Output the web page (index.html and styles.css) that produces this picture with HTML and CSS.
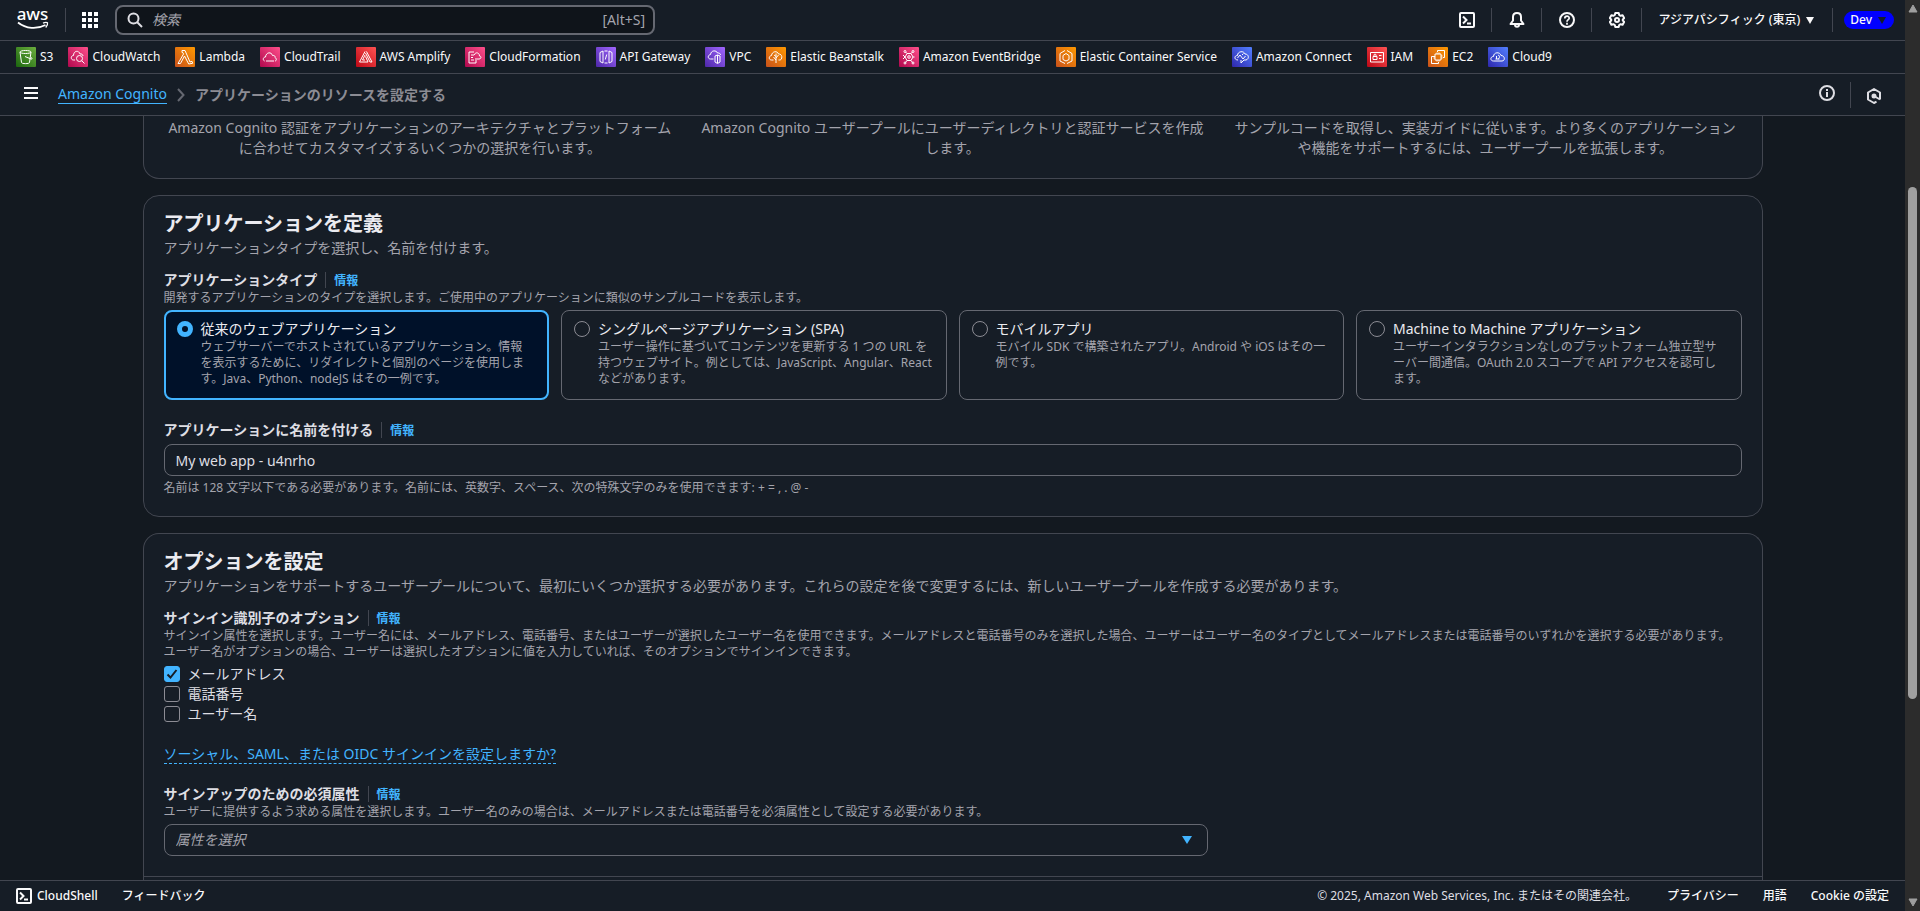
FILE: index.html
```html
<!DOCTYPE html>
<html lang="ja">
<head>
<meta charset="utf-8">
<title>アプリケーションのリソースを設定する | Amazon Cognito</title>
<meta name="viewport" content="width=device-width, initial-scale=1">
<link rel="stylesheet" href="styles.css">
</head>
<body>
<svg class="defs" aria-hidden="true">
  <defs>
    <linearGradient id="g-green" x1="0" y1="1" x2="1" y2="0"><stop offset="0" stop-color="#1b660f"/><stop offset="1" stop-color="#6cae3e"/></linearGradient>
    <linearGradient id="g-pink" x1="0" y1="1" x2="1" y2="0"><stop offset="0" stop-color="#b0084d"/><stop offset="1" stop-color="#ff4f8b"/></linearGradient>
    <linearGradient id="g-orange" x1="0" y1="1" x2="1" y2="0"><stop offset="0" stop-color="#c8511b"/><stop offset="1" stop-color="#ff9900"/></linearGradient>
    <linearGradient id="g-red" x1="0" y1="1" x2="1" y2="0"><stop offset="0" stop-color="#bd0816"/><stop offset="1" stop-color="#ff5252"/></linearGradient>
    <linearGradient id="g-purple" x1="0" y1="1" x2="1" y2="0"><stop offset="0" stop-color="#4d27a8"/><stop offset="1" stop-color="#a166ff"/></linearGradient>
    <linearGradient id="g-blue" x1="0" y1="1" x2="1" y2="0"><stop offset="0" stop-color="#2e27ad"/><stop offset="1" stop-color="#527fff"/></linearGradient>
  </defs>
</svg>
<div class="app">
  <header class="topbar">
    <a class="logo" href="#" aria-label="AWS"><svg width="32" height="38" viewBox="0 -9 32 38"><text x="15.500" y="10" text-anchor="middle">aws</text><path d="M1 12.500C9 19 20 19.500 28.500 15" fill="none" stroke="#fff" stroke-width="1.800"/><path d="M26 13.200c2-1 4-.8 4.500-.4.300 1-.3 3-1.800 4.700" fill="none" stroke="#fff" stroke-width="1.300"/></svg></a>
    <button class="apps" aria-label="サービス"><svg width="16" height="16" fill="#fff"><path d="M0 0h4v4H0zM6 0h4v4H6zM12 0h4v4h-4zM0 6h4v4H0zM6 6h4v4H6zM12 6h4v4h-4zM0 12h4v4H0zM6 12h4v4H6zM12 12h4v4h-4z"/></svg></button>
    <label class="search">
      <svg width="16" height="16" fill="none" stroke="#dedee3" stroke-width="2"><circle cx="6.500" cy="6.500" r="5"/><path d="M10 10l5 5"/></svg>
      <input type="search" placeholder="検索" aria-label="検索">
      <span>[Alt+S]</span>
    </label>
    <nav class="tools">
      <button aria-label="CloudShell"><svg width="16" height="16" fill="none" stroke="#f9f9fa" stroke-width="2"><rect x="1" y="1" width="14" height="14" rx="1"/><path d="M4 4.500l3.500 3.500L4 11.500M8 11.500h4"/></svg></button>
      <button aria-label="通知"><svg width="16" height="16" fill="none" stroke="#f9f9fa" stroke-width="2" stroke-linejoin="round"><path d="M8 1C5.500 1 4 2.800 4 5v3.500L1.500 12h13L12 8.500V5c0-2.200-1.500-4-4-4zM6 12.500c0 3 4 3 4 0"/></svg></button>
      <button aria-label="ヘルプ"><svg width="16" height="16" fill="none" stroke="#f9f9fa" stroke-width="2"><circle cx="8" cy="8" r="7"/><path d="M5.800 6.500c0-3 4.400-3 4.400-.3C10.200 7.700 8 7.700 8 9.700M8 10.800v2" stroke-width="1.700"/></svg></button>
      <button aria-label="設定"><svg width="16" height="16" fill="none" stroke="#f9f9fa" stroke-width="2" stroke-linejoin="round"><path d="M6.300 1h3.400l.5 2 1.400.8 2-.6 1.600 2.900L13.800 7.500v1l1.400 1.400-1.600 2.900-2-.6-1.400.8-.5 2H6.300l-.5-2-1.400-.8-2 .6L.8 9.900l1.400-1.400v-1L.8 6.100l1.600-2.900 2 .6L5.800 3z"/><circle cx="8" cy="8" r="2"/></svg></button>
      <button class="region">アジアパシフィック (東京) <svg width="8" height="7"><path fill="#f9f9fa" d="M0 0h8L4 7z"/></svg></button>
      <button class="account"><span>Dev <svg width="8" height="7"><path fill="#161d26" d="M0 0h8L4 7z"/></svg></span></button>
    </nav>
  </header>

  <nav class="services">
    <a href="#"><svg class="svc" viewBox="0 0 20 20"><rect width="20" height="20" rx="1" fill="url(#g-green)"/><path d="M4 5c0-2 11-2 11 0s-11 2-11 0zl1.500 10.500c0 1.500 8 1.500 8 0L15 5M9 9.500l6 2.500c1.500.5 1.500-1 0-1.500"/></svg>S3</a>
    <a href="#"><svg class="svc" viewBox="0 0 20 20"><rect width="20" height="20" rx="1" fill="url(#g-pink)"/><path d="M7 13H5.500c-3 0-3-4.500 0-4.500C5.500 3.500 11 3 12 7c1.500-.5 3 .5 3 2"/><circle cx="11.500" cy="11.500" r="3"/><path d="M13.800 13.800l2.700 2.700"/></svg>CloudWatch</a>
    <a href="#"><svg class="svc" viewBox="0 0 20 20"><rect width="20" height="20" rx="1" fill="url(#g-orange)"/><path d="M7 3.500h3l5 11.500 2-.7.700 2-4 .7L9.500 9l-4 7.500H3L8.500 7 7.800 5.500H7z"/></svg>Lambda</a>
    <a href="#"><svg class="svc" viewBox="0 0 20 20"><rect width="20" height="20" rx="1" fill="url(#g-pink)"/><path d="M4.500 14c-2-1-1.500-4 1-4C6 5 11.500 4.500 12.500 8.500c2-.5 3 1 2.500 2 2 1 1.500 3.500 0 3.500M6 14h8"/></svg>CloudTrail</a>
    <a href="#"><svg class="svc" viewBox="0 0 20 20"><rect width="20" height="20" rx="1" fill="url(#g-red)"/><path d="M9 4.500L3.500 15H12L9.500 9.500M9 8l-2.500 5h2.500M10.500 4.500L16 15h-2L9.500 6"/></svg>AWS Amplify</a>
    <a href="#"><svg class="svc" viewBox="0 0 20 20"><rect width="20" height="20" rx="1" fill="url(#g-pink)"/><path d="M9 5H4v11h7v-3M6 8h3M6 10.500h2M6 13h3M10 12h4c2.500 0 2.500-3 .5-3 0-4-5-4-5-1"/></svg>CloudFormation</a>
    <a href="#"><svg class="svc" viewBox="0 0 20 20"><rect width="20" height="20" rx="1" fill="url(#g-purple)"/><path d="M7 4L4 5.500v9L7 16zM13 4l3 1.500v9L13 16zM10.700 7.500l-1.400 5M8.500 4h3M8.500 16h3"/></svg>API Gateway</a>
    <a href="#"><svg class="svc" viewBox="0 0 20 20"><rect width="20" height="20" rx="1" fill="url(#g-purple)"/><path d="M8.500 12H5.500c-3 0-3-4 0-4.500C6 3 11.500 3 12.500 6c2-.3 3 .8 3 2M10 9l2.500-1L15 9v6l-2.500 1.500L10 15zM12.500 8v8"/></svg>VPC</a>
    <a href="#"><svg class="svc" viewBox="0 0 20 20"><rect width="20" height="20" rx="1" fill="url(#g-orange)"/><path d="M7.500 13H5.500c-3 0-3-4 0-4.500C6 4 11.500 3.500 12.500 7c4-.5 4.500 6 1 6h-1M10 6.500V16M10 13l-2.500-3M10 11l2.500-3M8 8l2 1.500"/></svg>Elastic Beanstalk</a>
    <a href="#"><svg class="svc" viewBox="0 0 20 20"><rect width="20" height="20" rx="1" fill="url(#g-pink)"/><path d="M8 6.500h4l2 3.500-2 3.500H8L6 10zM8 6.500L6.500 5M12 6.500L13.500 5M14 10h1.500M8 13.500L6.500 15.500M12 13.500l1.500 2M4 8l2 2-2 2"/><circle cx="6" cy="4.500" r="1"/><circle cx="14" cy="4.500" r="1"/><circle cx="10" cy="10" r="1.300"/><circle cx="6" cy="16" r="1"/><circle cx="14" cy="16" r="1"/></svg>Amazon EventBridge</a>
    <a href="#"><svg class="svc" viewBox="0 0 20 20"><rect width="20" height="20" rx="1" fill="url(#g-orange)"/><path d="M9 3.500L4 6.500v7.500l5 2.500M11 3.500l5 3v7.500l-5 2.500M10 6.500l-3 2v4l3 1.500 3-1.500v-4z"/></svg>Elastic Container Service</a>
    <a href="#"><svg class="svc" viewBox="0 0 20 20"><rect width="20" height="20" rx="1" fill="url(#g-blue)"/><path d="M6 13c-4 0-4-4.500-.5-4.500 0-4.500 6.500-5 7.500-1.500 4 0 4.500 5 1 6h-2l-3 3v-3M5.500 11l2.500-3 3 4 2.500-3M10 8l1.500-1.500"/></svg>Amazon Connect</a>
    <a href="#"><svg class="svc" viewBox="0 0 20 20"><rect width="20" height="20" rx="1" fill="url(#g-red)"/><path d="M3.500 5.500h13v9.500h-13zM6 9.500h4v3H6zM7 9.500V8c0-1.200 2-1.200 2 0v1.500M12 8.500h2.500M12 11.500h2.500"/></svg>IAM</a>
    <a href="#"><svg class="svc" viewBox="0 0 20 20"><rect width="20" height="20" rx="1" fill="url(#g-orange)"/><path d="M7 7h6v6H7zM9.500 5V3.500h7v7H15M7 9.500H3.500v7h7V15M9 7V5.500M11 7V5.500M13 9h1.500M13 11h1.500M9 13v1.500M11 13v1.500M7 11H5.500"/></svg>EC2</a>
    <a href="#"><svg class="svc" viewBox="0 0 20 20"><rect width="20" height="20" rx="1" fill="url(#g-blue)"/><path d="M5.500 14c-3.500 0-3.500-4.500 0-4.500C5.500 5 12 4.500 13 8.500c4 0 4.500 5.500 1 5.500zM8.500 9v3M10 8.500c2-1 2 3 0 3.500M7.500 12h4"/></svg>Cloud9</a>
  </nav>

  <div class="crumbs">
    <button class="menu" aria-label="メニュー"><svg width="14" height="12" fill="#f9f9fa"><path d="M0 0h14v2H0zM0 5h14v2H0zM0 10h14v2H0z"/></svg></button>
    <a class="crumb-link" href="#">Amazon Cognito</a>
    <svg width="8" height="14" fill="none" stroke="#656871" stroke-width="2"><path d="M1 1l5.500 6L1 13"/></svg>
    <span class="crumb-current">アプリケーションのリソースを設定する</span>
    <div class="crumb-tools">
      <button aria-label="情報"><svg width="16" height="16" fill="none" stroke="#dedee3" stroke-width="2"><circle cx="8" cy="8" r="7"/><path d="M8 4v2M8 7v5"/></svg></button>
      <button aria-label="ダイアグラム"><svg width="16" height="16" fill="none" stroke="#dedee3" stroke-width="2" stroke-linejoin="round"><path d="M10.500 13.700L8 15l-6-3.500v-7L8 1l6 3.500v7M8 8l6 3.500"/><circle cx="8" cy="8" r="1.500" fill="#dedee3"/></svg></button>
    </div>
  </div>

  <main class="content">
    <section class="card steps">
      <p>Amazon Cognito 認証をアプリケーションのアーキテクチャとプラットフォームに合わせてカスタマイズするいくつかの選択を行います。</p>
      <p>Amazon Cognito ユーザープールにユーザーディレクトリと認証サービスを作成します。</p>
      <p>サンプルコードを取得し、実装ガイドに従います。より多くのアプリケーションや機能をサポートするには、ユーザープールを拡張します。</p>
    </section>

    <section class="card">
      <h2>アプリケーションを定義</h2>
      <p class="lead">アプリケーションタイプを選択し、名前を付けます。</p>
      <div class="field" role="radiogroup" aria-labelledby="type-label">
        <div class="label"><span id="type-label">アプリケーションタイプ</span><a href="#">情報</a></div>
        <p class="hint">開発するアプリケーションのタイプを選択します。ご使用中のアプリケーションに類似のサンプルコードを表示します。</p>
        <div class="tiles">
          <label class="tile selected"><input type="radio" name="type" checked><span><b>従来のウェブアプリケーション</b><small>ウェブサーバーでホストされているアプリケーション。情報を表示するために、リダイレクトと個別のページを使用します。Java、Python、nodeJS はその一例です。</small></span></label>
          <label class="tile"><input type="radio" name="type"><span><b>シングルページアプリケーション (SPA)</b><small>ユーザー操作に基づいてコンテンツを更新する 1 つの URL を持つウェブサイト。例としては、JavaScript、Angular、React などがあります。</small></span></label>
          <label class="tile"><input type="radio" name="type"><span><b>モバイルアプリ</b><small>モバイル SDK で構築されたアプリ。Android や iOS はその一例です。</small></span></label>
          <label class="tile"><input type="radio" name="type"><span><b>Machine to Machine アプリケーション</b><small>ユーザーインタラクションなしのプラットフォーム独立型サーバー間通信。OAuth 2.0 スコープで API アクセスを認可します。</small></span></label>
        </div>
      </div>
      <div class="field">
        <div class="label"><label for="app-name">アプリケーションに名前を付ける</label><a href="#">情報</a></div>
        <input class="text" id="app-name" type="text" value="My web app - u4nrho">
        <p class="hint">名前は 128 文字以下である必要があります。名前には、英数字、スペース、次の特殊文字のみを使用できます: + = , . @ -</p>
      </div>
    </section>

    <section class="card open">
      <h2>オプションを設定</h2>
      <p class="lead">アプリケーションをサポートするユーザープールについて、最初にいくつか選択する必要があります。これらの設定を後で変更するには、新しいユーザープールを作成する必要があります。</p>
      <div class="field" role="group" aria-labelledby="signin-label">
        <div class="label"><span id="signin-label">サインイン識別子のオプション</span><a href="#">情報</a></div>
        <p class="hint">サインイン属性を選択します。ユーザー名には、メールアドレス、電話番号、またはユーザーが選択したユーザー名を使用できます。メールアドレスと電話番号のみを選択した場合、ユーザーはユーザー名のタイプとしてメールアドレスまたは電話番号のいずれかを選択する必要があります。ユーザー名がオプションの場合、ユーザーは選択したオプションに値を入力していれば、そのオプションでサインインできます。</p>
        <div class="checks">
          <label><input type="checkbox" checked>メールアドレス</label>
          <label><input type="checkbox">電話番号</label>
          <label><input type="checkbox">ユーザー名</label>
        </div>
      </div>
      <p class="social"><a href="#">ソーシャル、SAML、または OIDC サインインを設定しますか?</a></p>
      <div class="field">
        <div class="label"><label for="attrs">サインアップのための必須属性</label><a href="#">情報</a></div>
        <p class="hint">ユーザーに提供するよう求める属性を選択します。ユーザー名のみの場合は、メールアドレスまたは電話番号を必須属性として設定する必要があります。</p>
        <select class="text" id="attrs"><option>属性を選択</option></select>
      </div>
      <hr>
    </section>
  </main>

  <footer class="footer">
    <button><svg width="16" height="16" fill="none" stroke="#f9f9fa" stroke-width="2"><rect x="1" y="1" width="14" height="14" rx="1"/><path d="M4 4.500l3.500 3.500L4 11.500M8 11.500h4"/></svg>CloudShell</button>
    <a href="#">フィードバック</a>
    <span class="copyright">© 2025, Amazon Web Services, Inc. またはその関連会社。</span>
    <a href="#">プライバシー</a>
    <a href="#">用語</a>
    <a href="#">Cookie の設定</a>
  </footer>
</div>
<div class="scrollbar" aria-hidden="true">
  <svg width="10" height="9"><path fill="#9f9f9f" d="M5 1l4 7H1z" stroke="#9f9f9f" stroke-linejoin="round"/></svg>
  <div class="track"><div class="thumb"></div></div>
  <svg width="10" height="9"><path fill="#9f9f9f" d="M5 8l4-7H1z" stroke="#9f9f9f" stroke-linejoin="round"/></svg>
</div>
</body>
</html>
```
FILE: styles.css
```css
* { box-sizing: border-box; }

body {
  display: flex;
  height: 100vh;
  margin: 0;
  overflow: hidden;
  background: #131920;
  color: #dedee3;
  font: 14px/20px "Noto Sans", "Noto Sans CJK JP", sans-serif;
}

.defs { position: absolute; width: 0; height: 0; }

h2, p { margin: 0; }
a { color: inherit; text-decoration: none; }
svg { display: block; flex: none; }

button {
  display: flex;
  align-items: center;
  padding: 0;
  border: 0;
  background: none;
  color: inherit;
  font: inherit;
}

.app {
  display: flex;
  flex: 1;
  flex-direction: column;
  min-width: 0;
}

/* top navigation */
.topbar, .services, .crumbs, .footer {
  display: flex;
  flex: none;
  align-items: center;
  border-bottom: 1px solid #424650;
  background: #161d26;
  white-space: nowrap;
}

.topbar { height: 41px; padding: 0 11px 0 17px; }
.logo { padding-right: 16px; }
.logo text { fill: #fff; font-size: 17px; font-weight: 500; }

.apps {
  height: 24px;
  padding: 0 17px 0 16px;
  border-left: 1px solid #424650;
}

.search {
  display: flex;
  align-items: center;
  gap: 9px;
  width: 540px;
  height: 30px;
  padding: 0 8px 0 10px;
  border: 2px solid #656871;
  border-radius: 8px;
  background: #0f141a;
  color: #a4a4ad;
}

.search input {
  flex: 1;
  min-width: 0;
  padding: 0;
  border: 0;
  outline: 0;
  background: none;
  color: #dedee3;
  font: inherit;
}

.search input::placeholder { color: #a4a4ad; font-style: italic; }

.tools { display: flex; align-items: center; margin-left: auto; }

.tools button {
  height: 24px;
  padding: 0 16px 0 17px;
  border-left: 1px solid #424650;
  font-size: 12px;
  font-weight: 500;
  color: #f9f9fa;
}

.tools button:first-child { border: 0; }
.tools .region { gap: 6px; padding: 0 18px 0 17px; }
.tools .account { padding: 0 0 0 11px; }

.account span {
  display: flex;
  align-items: center;
  gap: 6px;
  height: 18px;
  padding: 0 8px 0 6px;
  border-radius: 9px;
  background: #0000ff;
}

.services {
  gap: 15px;
  height: 33px;
  padding: 0 16px;
  color: #f9f9fa;
  font-size: 12px;
}

.services a { display: flex; align-items: center; gap: 4px; }

.svc { width: 20px; height: 20px; }
.svc path, .svc circle { fill: none; stroke: #fff; stroke-width: 1; }

/* breadcrumbs */
.crumbs { height: 42px; padding: 0 23px 0 24px; }
.menu { margin-right: 20px; padding-bottom: 4px; }

.crumb-link {
  margin-right: 10px;
  border-bottom: 1px solid #42b4ff;
  color: #42b4ff;
  line-height: 18px;
}

.crumb-current { margin-left: 10px; color: #8c8c94; font-weight: 700; }
.crumb-tools { display: flex; margin-left: auto; }
.crumb-tools button { height: 26px; }
.crumb-tools button:first-child { padding: 0 15px 3px 0; }
.crumb-tools button:last-child { padding: 3px 0 0 15px; border-left: 1px solid #424650; }

/* page content */
.content {
  display: flex;
  flex: 1;
  flex-direction: column;
  gap: 16px;
  width: 100%;
  max-width: 1620px;
  min-height: 0;
  margin: 0 auto;
  overflow: hidden;
}

.card {
  flex: none;
  padding: 16px 20px 20px;
  border: 1px solid #424650;
  border-radius: 16px;
  background: #161d26;
}

.steps {
  display: grid;
  grid-template-columns: repeat(3, 1fr);
  gap: 20px;
  padding: 2px 20px 20px;
  border-top: 0;
  border-radius: 0 0 16px 16px;
  color: #a4a4ad;
  text-align: center;
}

.open { padding-bottom: 40px; border-bottom: 0; border-radius: 16px 16px 0 0; }

h2 { color: #ebebf0; font-size: 20px; font-weight: 700; line-height: 24px; }
.lead { margin-top: 2px; color: #a4a4ad; }
.field { margin-top: 12px; }
.field + .field { margin-top: 20px; }

.label { display: flex; align-items: center; height: 20px; font-weight: 700; }

.label a {
  height: 16px;
  margin-left: 8px;
  padding-left: 8px;
  border-left: 1px solid #424650;
  color: #42b4ff;
  font-size: 12px;
  line-height: 18px;
}

.hint { color: #a4a4ad; font-size: 12px; line-height: 16px; }

.tiles {
  display: grid;
  grid-template-columns: repeat(4, 1fr);
  gap: 12px;
  margin-top: 4px;
}

.tile {
  display: flex;
  gap: 8px;
  min-height: 90px;
  padding: 8px 13px 8px 12px;
  border: 1px solid #656871;
  border-radius: 8px;
  line-break: loose;
}

.tile.selected {
  padding: 7px 14px 7px 11px;
  border: 2px solid #42b4ff;
  background: #001129;
}

.tile b { display: block; font-weight: 400; color: #ebebf0; }
.tile small { display: block; color: #a4a4ad; font-size: 12px; line-height: 16px; }

input[type="radio"], input[type="checkbox"] {
  flex: none;
  width: 16px;
  height: 16px;
  margin: 2px 0;
  border: 1px solid #8c8c94;
  border-radius: 50%;
  appearance: none;
}

input[type="radio"]:checked { border: 5px solid #42b4ff; background: #001129; }
input[type="checkbox"] { border-radius: 3px; }

input[type="checkbox"]:checked {
  border-color: #42b4ff;
  background: #42b4ff url("data:image/svg+xml,%3Csvg xmlns='http://www.w3.org/2000/svg' viewBox='0 0 14 14'%3E%3Cpath d='M2.500 7.500l3 3 6-7.500' fill='none' stroke='%23161d26' stroke-width='2'/%3E%3C/svg%3E");
}

.text {
  display: block;
  width: 100%;
  height: 32px;
  margin: 4px 0;
  padding: 0 11px;
  border: 1px solid #656871;
  border-radius: 8px;
  background-color: #161d26;
  color: #dedee3;
  font: inherit;
}

select.text {
  width: 66.2%;
  appearance: none;
  background-image: url("data:image/svg+xml,%3Csvg xmlns='http://www.w3.org/2000/svg' width='10' height='8'%3E%3Cpath d='M0 0h10L5 8z' fill='%2342b4ff'/%3E%3C/svg%3E");
  background-position: right 15px center;
  background-repeat: no-repeat;
  color: #a4a4ad;
  font-style: italic;
}

.checks { display: flex; flex-direction: column; margin-top: 4px; }
.checks label { display: flex; gap: 8px; }

.social { margin: 20px 0; color: #42b4ff; }
.social a { border-bottom: 1px dashed #42b4ff; }

hr { margin: 20px -20px 0; border: 0; border-top: 1px solid #424650; }

.footer {
  gap: 24px;
  height: 31px;
  padding: 0 16px;
  border-top: 1px solid #424650;
  border-bottom: 0;
  color: #f9f9fa;
  font-size: 12px;
  font-weight: 500;
}

.footer button { gap: 5px; }
.copyright { margin-left: auto; margin-right: 6px; color: #dedee3; font-weight: 400; }

/* scrollbar */
.scrollbar {
  display: flex;
  flex: none;
  flex-direction: column;
  align-items: center;
  width: 15px;
  padding: 4px 0;
  background: #2c2c2c;
}

.track { flex: 1; width: 9px; padding-top: 174px; }
.thumb { height: 72%; border-radius: 5px; background: #9f9f9f; }
```
